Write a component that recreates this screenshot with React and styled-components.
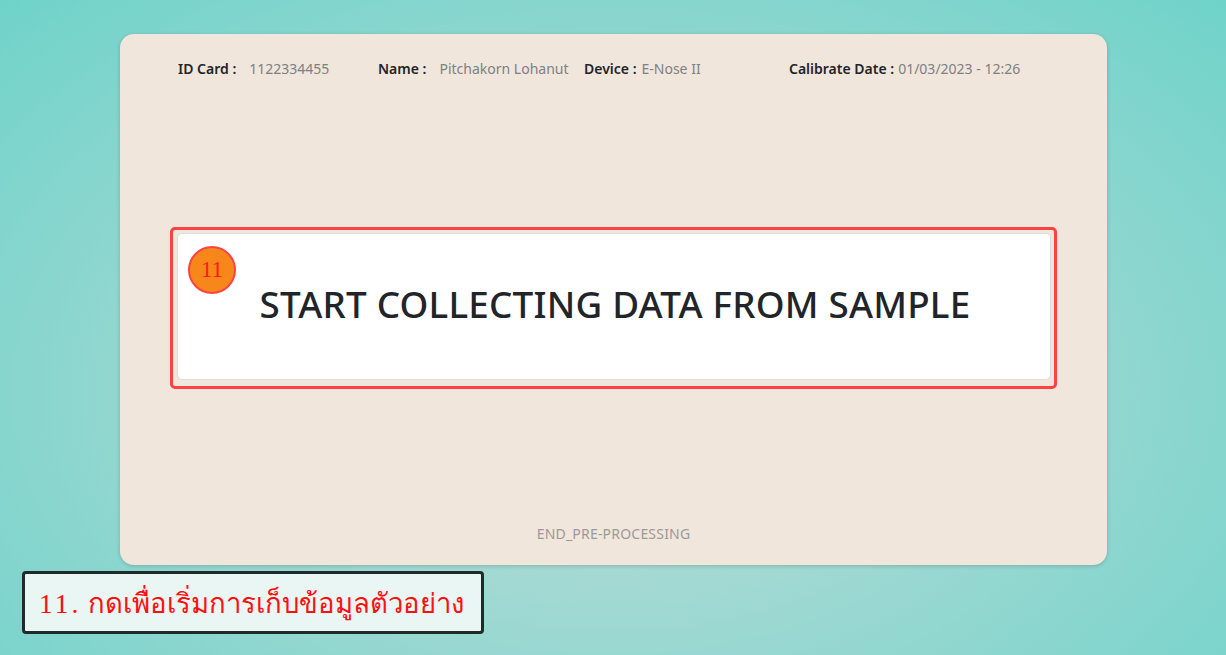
import React from 'react';
import styled, { createGlobalStyle } from 'styled-components';

const GlobalStyle = createGlobalStyle`
  html, body {
    margin: 0;
    padding: 0;
  }
  body {
    font-family: "Noto Sans", "Open Sans", sans-serif;
    background: radial-gradient(ellipse at 50% 60%, #b4dcd7 0%, #a3d9d3 35%, #6fd3ca 100%);
    min-height: 655px;
  }
`;

const Page = styled.div`
  position: relative;
  width: 1226px;
  height: 655px;
  padding-top: 34px;
  box-sizing: border-box;
`;

const Card = styled.div`
  width: 987px;
  height: 531px;
  margin: 0 auto 0 120px;
  background: #f1e6dc;
  border-radius: 14px;
  box-shadow: 0 1px 4px rgba(0, 0, 0, 0.18);
  box-sizing: border-box;
  display: flex;
  flex-direction: column;
  padding: 24px 50px 22px;
`;

const InfoRow = styled.div`
  display: flex;
  align-items: center;
  padding-left: 8px;
  height: 21px;
  font-size: 14px;
`;

const Field = styled.div`
  display: flex;
  align-items: baseline;
  width: ${({ width }) => width}px;
  gap: ${({ gap }) => gap}px;
  white-space: nowrap;
`;

const Label = styled.span`
  color: #212529;
  font-weight: 600;
`;

const Value = styled.span`
  color: #7d8084;
`;

const Body = styled.div`
  flex: 1;
  display: flex;
  flex-direction: column;
  padding-top: 148px;
`;

const Highlight = styled.div`
  position: relative;
  border: 3px solid #ff4343;
  border-radius: 5px;
  padding: 3px 3px 6px 4px;
`;

const StartButton = styled.button`
  width: 100%;
  height: 147px;
  background: #ffffff;
  border: 1px solid #dcdcdc;
  border-radius: 5px;
  color: #212529;
  font-family: "Noto Sans", "Open Sans", sans-serif;
  font-size: 36.8px;
  font-weight: 500;
  letter-spacing: 0.2px;
  padding: 0 0 6px 2px;
  cursor: pointer;
`;

const StepBadge = styled.div`
  position: absolute;
  left: 17px;
  top: 18px;
  width: 44px;
  height: 44px;
  border-radius: 50%;
  background: #f7861b;
  border: 2px solid #ff4343;
  color: #ff1a1a;
  font-family: "Liberation Serif", "DejaVu Serif", serif;
  font-size: 23px;
  display: flex;
  align-items: center;
  justify-content: center;
  box-sizing: content-box;
  margin: -2px;
`;

const Footer = styled.div`
  text-align: center;
  font-size: 14px;
  color: #9a9a9a;
  letter-spacing: 0.2px;
`;

const Caption = styled.div`
  position: absolute;
  left: 22px;
  top: 571px;
  width: 462px;
  height: 63px;
  box-sizing: border-box;
  border: 3px solid #1f2b29;
  border-radius: 4px;
  background: #eaf6f4;
  color: #ff1010;
  font-family: "Liberation Serif", "DejaVu Serif", serif;
  font-size: 27.5px;
  display: flex;
  align-items: center;
  padding-left: 14px;
  white-space: nowrap;
`;

const StepNo = styled.span`
  letter-spacing: 3px;
`;

export default function App() {
  return (
    <>
      <GlobalStyle />
      <Page>
        <Card>
          <InfoRow>
            <Field width={200} gap={13}>
              <Label>ID Card :</Label>
              <Value>1122334455</Value>
            </Field>
            <Field width={206} gap={13}>
              <Label>Name :</Label>
              <Value>Pitchakorn Lohanut</Value>
            </Field>
            <Field width={205} gap={5}>
              <Label>Device :</Label>
              <Value>E-Nose II</Value>
            </Field>
            <Field width={260} gap={4}>
              <Label>Calibrate Date :</Label>
              <Value>01/03/2023 - 12:26</Value>
            </Field>
          </InfoRow>
          <Body>
            <Highlight>
              <StartButton>START COLLECTING DATA FROM SAMPLE</StartButton>
              <StepBadge>11</StepBadge>
            </Highlight>
          </Body>
          <Footer>END_PRE-PROCESSING</Footer>
        </Card>
        <Caption>
          <span>
            <StepNo>11.</StepNo> กดเพื่อเริ่มการเก็บข้อมูลตัวอย่าง
          </span>
        </Caption>
      </Page>
    </>
  );
}
